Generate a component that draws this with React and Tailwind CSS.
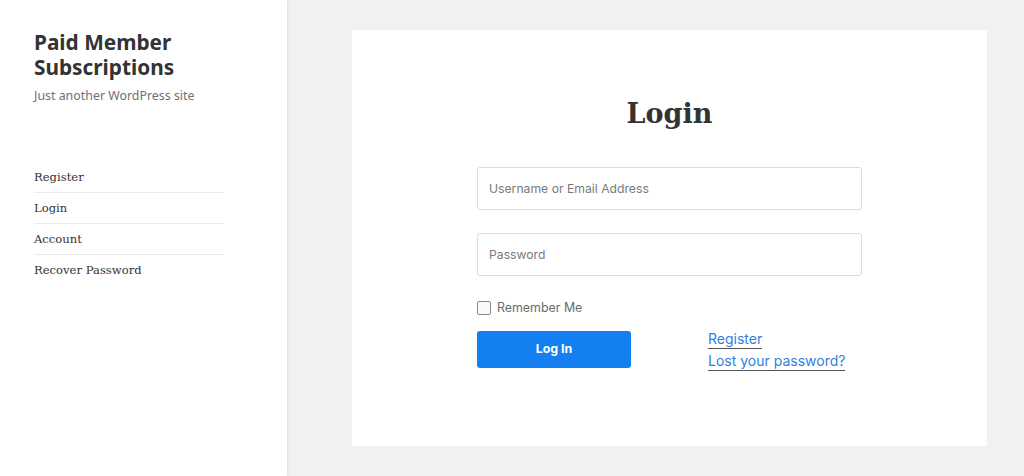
const navItems = ["Register", "Login", "Account", "Recover Password"];

const App = () => {
  return (
    <div className="flex h-[476px] w-[1024px] overflow-hidden bg-[#f1f1f1]">
      <aside className="w-[287px] shrink-0 bg-white pl-[34px] pt-[30px] shadow-[1px_0_2px_rgba(0,0,0,0.08)]">
        <h1 className="font-['Noto_Sans',sans-serif] text-[20.8px] font-bold leading-[25px] text-[#333]">
          Paid Member
          <br />
          Subscriptions
        </h1>
        <p className="mt-[8px] font-['Noto_Sans',sans-serif] text-[12.4px] leading-[16px] text-[#707070]">
          Just another WordPress site
        </p>
        <nav className="mt-[58px] w-[190px]">
          {navItems.map((item, i) => (
            <div
              key={item}
              className={`font-['DejaVu_Serif',serif] text-[11.6px] leading-[30px] text-[#333] ${
                i < navItems.length - 1 ? "border-b border-[#eaeaea]" : ""
              }`}
            >
              {item}
            </div>
          ))}
        </nav>
      </aside>

      <main className="flex-1 pl-[65px] pt-[30px]">
        <div className="flex h-[416px] w-[635px] flex-col items-center bg-white pt-[70px] font-['Inter',sans-serif]">
          <h2 className="-mt-[4px] font-['DejaVu_Serif',serif] text-[27px] font-bold leading-[36px] text-[#333]">
            Login
          </h2>

          <div className="mt-[35px] w-[385px]">
            <input
              placeholder="Username or Email Address"
              className="h-[43px] w-full rounded-[3px] border border-[#dcdcdc] px-[11px] text-[12.2px] text-[#333] outline-none placeholder:text-[#7a7a7a]"
            />
            <input
              type="password"
              placeholder="Password"
              className="mt-[23px] h-[43px] w-full rounded-[3px] border border-[#dcdcdc] px-[11px] text-[12.2px] text-[#333] outline-none placeholder:text-[#7a7a7a]"
            />

            <label className="mt-[23px] flex items-center gap-[6px] text-[12.4px] text-[#6b6b6b]">
              <span className="block h-[14px] w-[14px] rounded-[2px] border border-[#8a8a8a] bg-[#fafafa]" />
              Remember Me
            </label>

            <div className="mt-[13px] flex items-start">
              <button className="h-[37px] w-[154px] rounded-[3px] bg-[#147ff1] text-[12.4px] font-bold text-white">
                Log In
              </button>
              <div className="-mt-[2px] ml-[77px] flex flex-col items-start text-[14px] leading-[21px] text-[#2f7fe0]">
                <a className="border-b border-[#555] leading-[19px]">Register</a>
                <a className="mt-[2px] border-b border-[#555] leading-[19px]">Lost your password?</a>
              </div>
            </div>
          </div>
        </div>
      </main>
    </div>
  );
};

export default App;
